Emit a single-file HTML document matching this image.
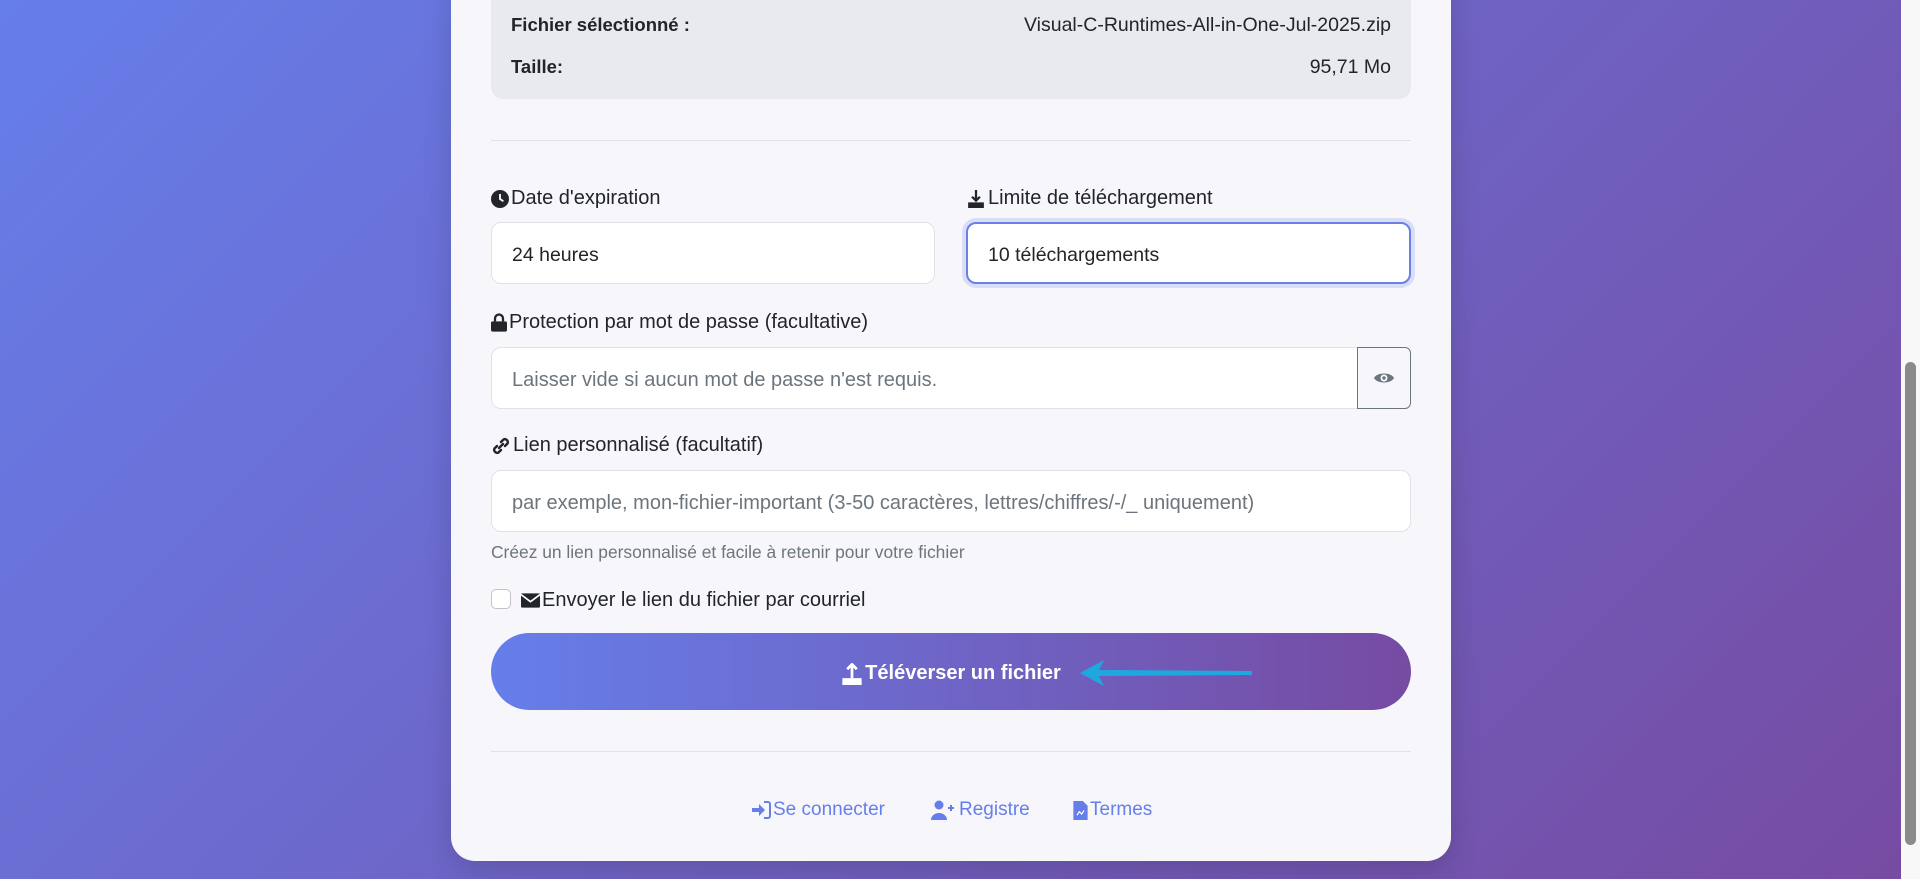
<!DOCTYPE html>
<html><head><meta charset="utf-8"><style>
*{box-sizing:border-box;margin:0;padding:0}
html,body{width:1920px;height:879px;overflow:hidden}
body{font-family:"Liberation Sans",sans-serif;background:linear-gradient(135deg,#667eea 0%,#764ba2 100%);position:relative;color:#212529}
.sb{position:absolute;right:0;top:0;width:19px;height:879px;background:#f8f8f8}
.thumb{position:absolute;left:4px;top:362px;width:11px;height:483px;background:#8a8a8a;border-radius:6px}
.card{position:absolute;left:451px;top:-30px;width:1000px;height:891px;background:#f7f7fb;border-radius:24px;box-shadow:0 10px 30px rgba(0,0,0,.15)}
.abs{position:absolute}
.grey{left:40px;top:0;width:920px;height:129px;background:#e9eaee;border-radius:12px}
.row{left:60px;width:880px;font-size:19.5px;display:flex;justify-content:space-between}
.row b{font-weight:bold;font-size:18.5px}
.hr{left:40px;width:920px;height:1px;background:#e1e1e8}
.lbl{font-size:20px;display:flex;align-items:center;gap:2px}
.inp{background:#fff;border:1px solid #dee2e6;border-radius:10px;height:62px;display:flex;align-items:center;padding-left:20px;font-size:19.5px}
.ph{color:#6c757d;font-size:20px}
.btn{left:40px;width:920px;height:77px;border-radius:39px;background:linear-gradient(90deg,#667eea,#764ba2);color:#fff;font-weight:bold;font-size:20px;display:flex;align-items:center;justify-content:center;gap:2px;padding-top:4px}
.ft{color:#667eea;font-size:19px;display:flex;align-items:center;gap:2px}
</style></head><body>
<div class="sb"><div class="thumb"></div></div>
<div class="card">
 <div class="abs grey"></div>
 <div class="abs row" style="top:44px"><b>Fichier sélectionné :</b><span>Visual-C-Runtimes-All-in-One-Jul-2025.zip</span></div>
 <div class="abs row" style="top:86px"><b>Taille:</b><span>95,71 Mo</span></div>
 <div class="abs hr" style="top:170px"></div>

 <div class="abs lbl" style="left:40px;top:217px"><svg width="18" height="18" viewBox="0 0 16 16"><circle cx="8" cy="8" r="8" fill="#212529"/><path d="M8 3.5V8l3 2" stroke="#fff" stroke-width="1.6" fill="none"/></svg>Date d'expiration</div>
 <div class="abs lbl" style="left:515px;top:217px"><svg width="20" height="18" viewBox="0 0 16 16"><path d="M8 0v9M4.5 6 8 9.5 11.5 6" stroke="#212529" stroke-width="2" fill="none"/><rect x="1" y="11" width="14" height="5" fill="#212529"/></svg>Limite de téléchargement</div>
 <div class="abs inp" style="left:40px;top:252px;width:444px;padding-top:4px">24 heures</div>
 <div class="abs inp" style="left:515px;top:252px;width:445px;border:2px solid #6b7fe6;box-shadow:0 0 0 4px rgba(102,126,234,.2);padding-top:4px">10 téléchargements</div>

 <div class="abs lbl" style="left:40px;top:341px"><svg width="16" height="19" viewBox="0 0 14 16"><path d="M3.5 7V4.5a3.5 3.5 0 0 1 7 0V7" stroke="#212529" stroke-width="2" fill="none"/><rect x="0" y="7" width="14" height="9" rx="1.5" fill="#212529"/></svg>Protection par mot de passe (facultative)</div>
 <div class="abs inp" style="left:40px;top:377px;width:867px;border-radius:10px 0 0 10px;padding-top:4px"><span class="ph">Laisser vide si aucun mot de passe n'est requis.</span></div>
 <div class="abs" style="left:906px;top:377px;width:54px;height:62px;border:1px solid #6c757d;border-radius:0 6px 6px 0;display:flex;align-items:center;justify-content:center"><svg width="22" height="16" viewBox="0 0 22 16"><path d="M1 8C4 2 18 2 21 8C18 14 4 14 1 8Z" fill="#6c757d"/><circle cx="11" cy="8" r="3.5" fill="#fff"/><circle cx="11" cy="8" r="1.8" fill="#6c757d"/></svg></div>

 <div class="abs lbl" style="left:40px;top:464px"><svg width="20" height="18" viewBox="0 0 20 18"><path d="M8 11 12 7M6 9 3.5 11.5a3 3 0 0 0 4 4L10 13M14 9l2.5-2.5a3 3 0 0 0-4-4L10 5" stroke="#212529" stroke-width="2.4" fill="none" stroke-linecap="round"/></svg>Lien personnalisé (facultatif)</div>
 <div class="abs inp" style="left:40px;top:500px;width:920px;padding-top:4px"><span class="ph">par exemple, mon-fichier-important (3-50 caractères, lettres/chiffres/-/_ uniquement)</span></div>
 <div class="abs" style="left:40px;top:572px;font-size:17.4px;color:#6c757d">Créez un lien personnalisé et facile à retenir pour votre fichier</div>

 <div class="abs" style="left:40px;top:619px;width:20px;height:20px;border:1px solid #bfc4ca;border-radius:5px;background:#fff"></div>
 <div class="abs lbl" style="left:70px;top:619px"><svg width="19" height="15" viewBox="0 0 16 12"><rect width="16" height="12" rx="1" fill="#212529"/><path d="M0 1l8 6 8-6" stroke="#fff" stroke-width="1.4" fill="none"/></svg>Envoyer le lien du fichier par courriel</div>

 <div class="abs btn" style="top:663px"><svg width="22" height="22" viewBox="0 0 16 16"><path d="M8 11V1M4.5 4.5 8 1l3.5 3.5" stroke="#fff" stroke-width="2" fill="none"/><rect x="1" y="11" width="14" height="5" fill="#fff"/></svg>Téléverser un fichier</div>
 <svg class="abs" style="left:627px;top:688px" width="180" height="30" viewBox="0 0 180 30"><path d="M2 15 26 2 21 12 174 13 174 17 21 18 26 28Z" fill="#1fa8e0"/></svg>

 <div class="abs hr" style="top:781px"></div>
 <div class="abs ft" style="left:300px;top:829px"><svg width="20" height="18" viewBox="0 0 20 18"><path d="M1 7h7V3l6 6-6 6v-4H1Z" fill="#667eea"/><path d="M13 1h4a2 2 0 0 1 2 2v12a2 2 0 0 1-2 2h-4" stroke="#667eea" stroke-width="2" fill="none"/></svg>Se connecter</div>
 <div class="abs ft" style="left:480px;top:829px"><svg width="26" height="20" viewBox="0 0 26 20"><circle cx="8" cy="5" r="4.5" fill="#667eea"/><path d="M0 20a8 7 0 0 1 16 0Z" fill="#667eea"/><path d="M20 5v6M17 8h6" stroke="#667eea" stroke-width="2"/></svg>Registre</div>
 <div class="abs ft" style="left:622px;top:829px"><svg width="15" height="19" viewBox="0 0 12 16"><path d="M0 0h8l4 4v12H0Z" fill="#667eea"/><path d="M3 12l2-3 2 2 2-3" stroke="#fff" fill="none"/></svg>Termes</div>
</div>
</body></html>
